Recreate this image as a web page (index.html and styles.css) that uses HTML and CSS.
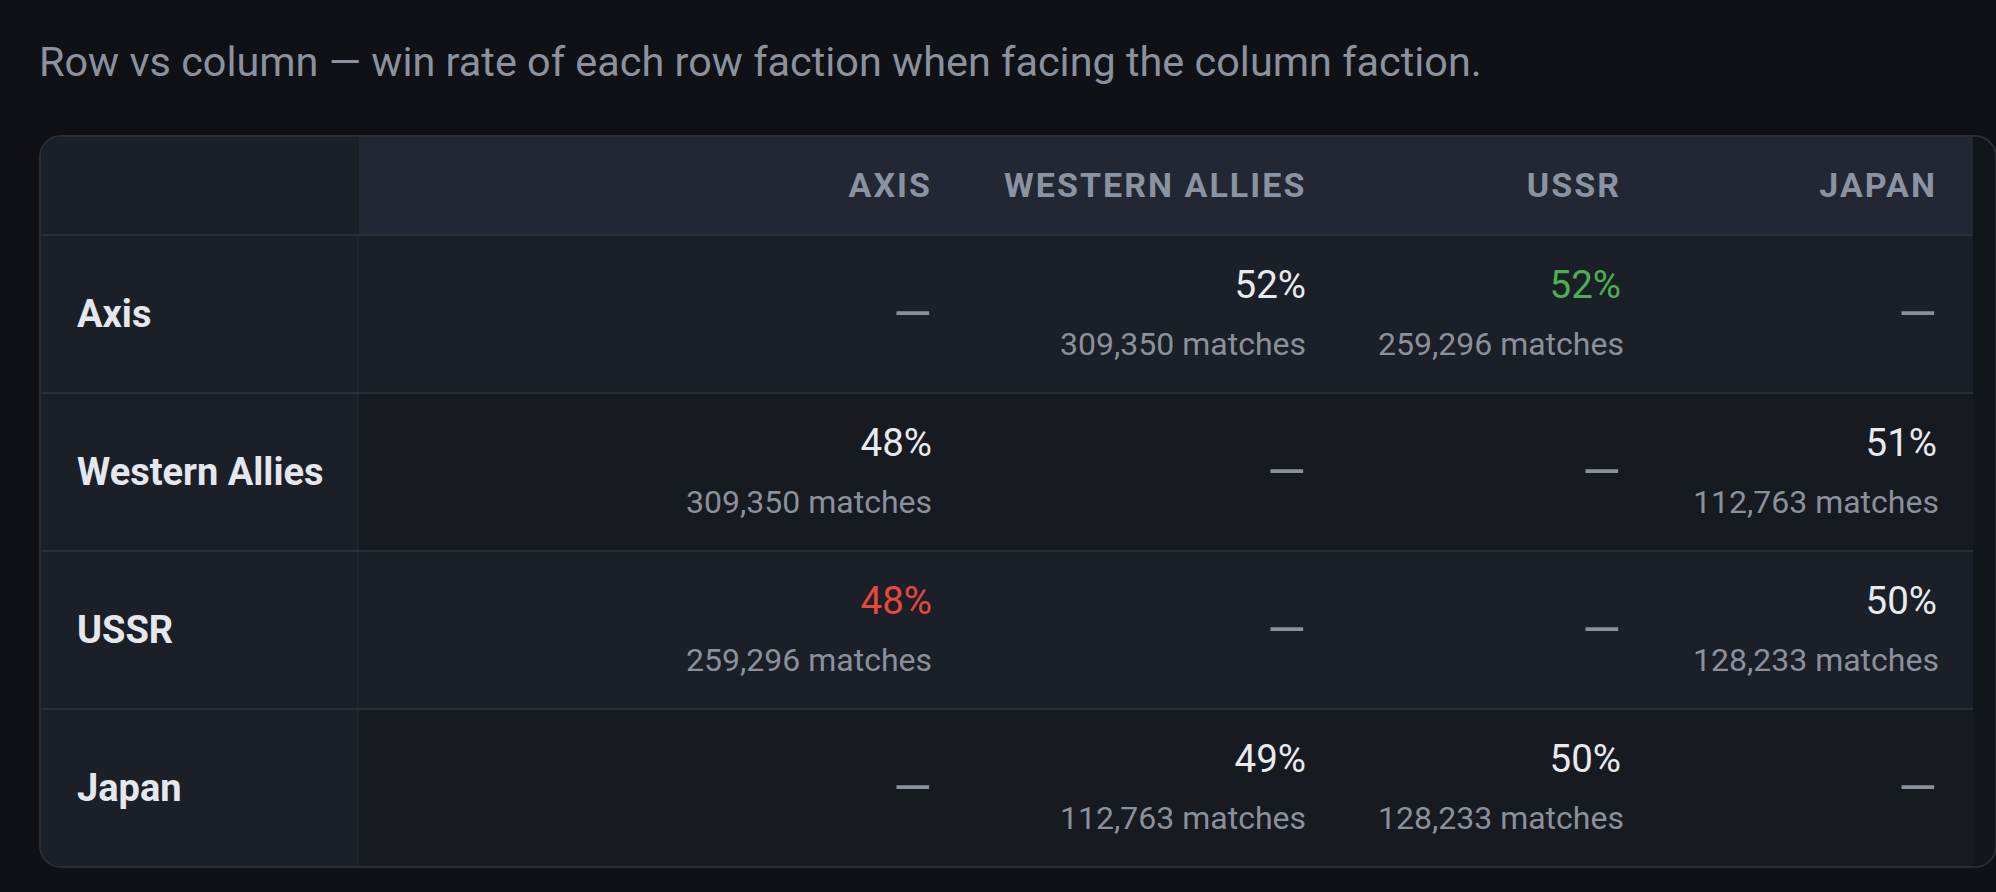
FILE: index.html
```html
<!DOCTYPE html>
<html lang="en">
<head>
<meta charset="utf-8">
<title>Faction matchup matrix</title>
<link rel="stylesheet" href="styles.css">
</head>
<body>
<main class="page">
  <p class="caption">Row vs column — win rate of each row faction when facing the column faction.</p>
  <div class="matrix-wrap">
    <table class="matrix">
      <colgroup>
        <col class="col-label">
        <col class="col-axis">
        <col class="col-wa">
        <col class="col-ussr">
        <col class="col-japan">
      </colgroup>
      <thead>
        <tr>
          <th class="corner"></th>
          <th>Axis</th>
          <th>Western Allies</th>
          <th>USSR</th>
          <th>Japan</th>
        </tr>
      </thead>
      <tbody>
        <tr>
          <th class="row-label" scope="row">Axis</th>
          <td><span class="empty">—</span></td>
          <td><div class="pct">52%</div><div class="count">309,350 matches</div></td>
          <td><div class="pct pct-good">52%</div><div class="count">259,296 matches</div></td>
          <td><span class="empty">—</span></td>
        </tr>
        <tr class="alt">
          <th class="row-label" scope="row">Western Allies</th>
          <td><div class="pct">48%</div><div class="count">309,350 matches</div></td>
          <td><span class="empty">—</span></td>
          <td><span class="empty">—</span></td>
          <td><div class="pct">51%</div><div class="count">112,763 matches</div></td>
        </tr>
        <tr>
          <th class="row-label" scope="row">USSR</th>
          <td><div class="pct pct-bad">48%</div><div class="count">259,296 matches</div></td>
          <td><span class="empty">—</span></td>
          <td><span class="empty">—</span></td>
          <td><div class="pct">50%</div><div class="count">128,233 matches</div></td>
        </tr>
        <tr class="alt">
          <th class="row-label" scope="row">Japan</th>
          <td><span class="empty">—</span></td>
          <td><div class="pct">49%</div><div class="count">112,763 matches</div></td>
          <td><div class="pct">50%</div><div class="count">128,233 matches</div></td>
          <td><span class="empty">—</span></td>
        </tr>
      </tbody>
    </table>
  </div>
</main>
</body>
</html>
```

FILE: styles.css
```css
* {
  box-sizing: border-box;
}

html, body {
  margin: 0;
  background: #0f1116;
  overflow: hidden;
}

body {
  font-family: Roboto, "Liberation Sans", sans-serif;
  color: #e6e9ef;
}

.page {
  padding: 38px 0 0 39px;
}

.caption {
  margin: 0 0 48px;
  font-size: 41.4px;
  line-height: 49px;
  color: #8b929e;
}

.matrix-wrap {
  width: 1958px;
  border: 2px solid #2a2e36;
  border-radius: 22px;
  background: #12151a;
  overflow: hidden;
}

.matrix {
  width: 1932px;
  table-layout: fixed;
  border-collapse: collapse;
  border-spacing: 0;
}

.col-label { width: 318px; }
.col-axis { width: 609px; }
.col-wa { width: 374px; }
.col-ussr { width: 315px; }
.col-japan { width: 316px; }

.matrix thead th {
  background: #222733;
  padding: 28px 36px;
  line-height: 41px;
  font-size: 34px;
  font-weight: 700;
  letter-spacing: 0.06em;
  text-transform: uppercase;
  text-align: right;
  color: #8a93a1;
  border-bottom: 2px solid #2a2e36;
  white-space: nowrap;
}

.matrix thead th.corner {
  background: #1b1f27;
}

.matrix tbody td,
.matrix tbody th {
  padding: 25px 36px;
  background: #1b1f27;
  border-bottom: 2px solid #2a2e36;
  vertical-align: middle;
  white-space: nowrap;
}

.matrix tbody tr:last-child td,
.matrix tbody tr:last-child th {
  border-bottom: none;
}

.matrix tbody td {
  text-align: right;
}

.matrix tbody tr.alt td {
  background: #171a21;
}

.matrix .row-label {
  text-align: left;
  font-size: 38px;
  font-weight: 700;
  color: #e4e7ee;
  box-shadow: inset -2px 0 0 #1f232b;
}

.pct {
  font-size: 38.5px;
  line-height: 48px;
  color: #e8eaef;
}

.pct-good {
  color: #4caf50;
}

.pct-bad {
  color: #e5483f;
}

.count {
  margin-top: 13px;
  font-size: 32px;
  line-height: 45px;
  color: #8a919c;
}

.empty {
  font-size: 50px;
  line-height: 54px;
  color: #8a919c;
}
```
